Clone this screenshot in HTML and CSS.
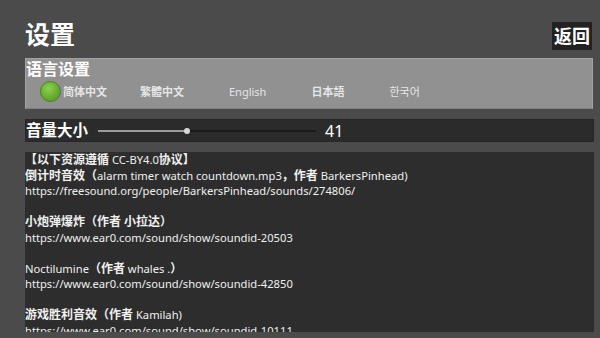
FILE: index.html
```html
<!DOCTYPE html>
<html lang="zh">
<head>
    <meta charset="UTF-8">
    <meta name="viewport" content="width=device-width, initial-scale=1.0">
    <title>设置</title>
    <link rel="stylesheet" href="styles.css">
</head>
<body>
    <div class="header">
        <h1 class="title">设置</h1>
        <button class="back-btn">返回</button>
    </div>

    <div class="lang-panel">
        <div class="panel-title">语言设置</div>
        <div class="lang-row">
            <span class="lang on"><span class="dot"></span><b>简体中文</b></span>
            <span class="lang"><b>繁體中文</b></span>
            <span class="lang">English</span>
            <span class="lang"><b>日本語</b></span>
            <span class="lang">한국어</span>
        </div>
    </div>

    <div class="volume-row">
        <span class="volume-label">音量大小</span>
        <div class="slider">
            <div class="slider-fill" style="width: 41%"></div>
            <div class="slider-thumb" style="left: 41%"></div>
        </div>
        <span class="volume-value">41</span>
    </div>

    <div class="credits">
        <div class="credits-inner">
            <p><b>【以下资源遵循</b> CC-BY4.0<b>协议】</b></p>
            <p><b>倒计时音效（</b>alarm timer watch countdown.mp3<b>，作者</b> BarkersPinhead)</p>
            <p>https://freesound.org/people/BarkersPinhead/sounds/274806/</p>
            <p>&nbsp;</p>
            <p><b>小炮弹爆炸（作者 小拉达）</b></p>
            <p>https://www.ear0.com/sound/show/soundid-20503</p>
            <p>&nbsp;</p>
            <p>Noctilumine<b>（作者</b> whales .<b>）</b></p>
            <p>https://www.ear0.com/sound/show/soundid-42850</p>
            <p>&nbsp;</p>
            <p><b>游戏胜利音效（作者</b> Kamilah)</p>
            <p>https://www.ear0.com/sound/show/soundid-10111</p>
        </div>
    </div>
</body>
</html>
```

FILE: styles.css
```css
body {
    margin: 0;
    padding: 0 6px 0 25px;
    background: #4b4b4b;
    color: #fff;
    font-family: "Noto Sans", "Noto Sans CJK SC", sans-serif;
    height: 338px;
    box-sizing: border-box;
    overflow: hidden;
}
.header {
    display: flex;
    justify-content: space-between;
    align-items: flex-end;
    margin-top: 18px;
    margin-right: 2px;
}
.title {
    margin: 0;
    font-size: 25px;
    line-height: 32px;
    font-weight: bold;
}
.back-btn {
    background: #222;
    color: #fff;
    border: none;
    font-family: inherit;
    font-size: 18px;
    font-weight: bold;
    line-height: 28px;
    padding: 0 2px;
    cursor: pointer;
}
.lang-panel {
    margin-top: 8px;
    margin-right: 1px;
    background: #919191;
    border: 1px solid #a3a3a3;
    border-bottom-color: #7f7f7f;
    height: 51px;
    box-sizing: border-box;
}
.panel-title {
    font-size: 16px;
    line-height: 20px;
    font-weight: bold;
}
.lang-row {
    display: flex;
    align-items: center;
    gap: 45px;
    height: 24px;
    padding-left: 14px;
}
.lang {
    display: flex;
    align-items: center;
    font-size: 11px;
    color: #e6e6e6;
}
.lang.on {
    margin-right: -12px;
}
.dot {
    width: 19px;
    height: 19px;
    border-radius: 50%;
    background: radial-gradient(circle at 40% 35%, #8fd04f, #62aa2d 60%, #4f8f22);
    border: 1px solid #4a7f24;
    margin-right: 2px;
}
.volume-row {
    display: flex;
    align-items: center;
    margin-top: 10px;
    height: 23px;
    background: #2b2b2b;
    border: 1px solid #262626;
    box-sizing: border-box;
}
.volume-label {
    font-size: 15.5px;
    font-weight: bold;
    line-height: 21px;
}
.slider {
    position: relative;
    width: 218px;
    height: 2px;
    margin-left: 10px;
    background: #1c1c1c;
}
.slider-fill {
    height: 100%;
    background: #9c9c9c;
}
.slider-thumb {
    position: absolute;
    top: -2px;
    width: 6px;
    height: 6px;
    margin-left: -3px;
    border-radius: 50%;
    background: #d8d8d8;
}
.volume-value {
    margin-left: 9px;
    font-size: 16px;
}
.credits {
    margin-top: 10px;
    height: 180px;
    background: #2d2d2d;
    overflow-y: scroll;
    font-size: 11.2px;
    line-height: 15.5px;
    color: #f0f0f0;
}
.credits-inner {
    padding-bottom: 290px;
}
.credits p {
    margin: 0;
    white-space: nowrap;
}
.credits b {
    font-size: 12px;
}
.credits::-webkit-scrollbar {
    width: 3px;
}
.credits::-webkit-scrollbar-track {
    background: #1f1f1f;
}
.credits::-webkit-scrollbar-thumb {
    background: #8a8a8a;
}
```
